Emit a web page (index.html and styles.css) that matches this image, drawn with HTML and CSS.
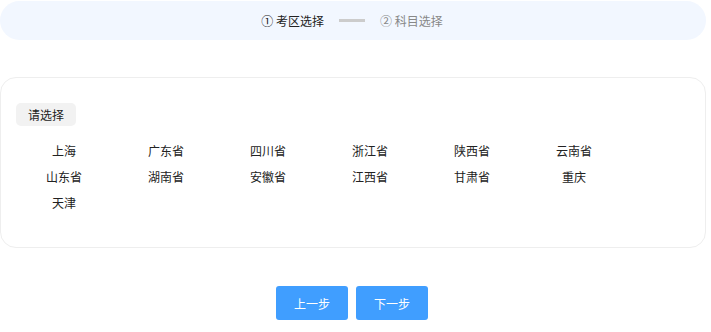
FILE: index.html
```html
<!DOCTYPE html>
<html lang="zh-CN">
<head>
    <meta charset="UTF-8">
    <meta name="viewport" content="width=device-width, initial-scale=1.0">
    <title>考区选择</title>
    <link rel="stylesheet" href="styles.css">
</head>
<body>

<div class="page">
    <div class="steps">
        <span class="step active">① 考区选择</span>
        <span class="step-line"></span>
        <span class="step">② 科目选择</span>
    </div>

    <div class="area-card">
        <span class="tag">请选择</span>
        <div class="area-list">
            <span class="area">上海</span>
            <span class="area">广东省</span>
            <span class="area">四川省</span>
            <span class="area">浙江省</span>
            <span class="area">陕西省</span>
            <span class="area">云南省</span>
            <span class="area">山东省</span>
            <span class="area">湖南省</span>
            <span class="area">安徽省</span>
            <span class="area">江西省</span>
            <span class="area">甘肃省</span>
            <span class="area">重庆</span>
            <span class="area">天津</span>
        </div>
    </div>

    <div class="actions">
        <button class="btn">上一步</button>
        <button class="btn">下一步</button>
    </div>
</div>

</body>
</html>
```

FILE: styles.css
```css
body {
    font-family: "Noto Sans CJK SC", "Liberation Sans", sans-serif;
    font-size: 12px;
    color: #222;
    background: #fff;
    margin: 0;
    padding: 0;
}
.page {
    width: 706px;
    padding-top: 1px;
}
.steps {
    height: 39px;
    background-color: #f2f7ff;
    border-radius: 20px;
    display: flex;
    align-items: center;
    justify-content: center;
    gap: 15px;
    padding-right: 2px;
}
.step {
    color: #888;
}
.step.active {
    color: #222;
}
.step-line {
    width: 26px;
    height: 3px;
    background-color: #ccc;
}
.area-card {
    margin-top: 37px;
    height: 171px;
    box-sizing: border-box;
    border: 1px solid #eee;
    border-radius: 16px;
    padding: 25px 0 0 15px;
}
.tag {
    display: inline-block;
    width: 60px;
    height: 23px;
    line-height: 23px;
    text-align: center;
    background-color: #f2f2f2;
    border-radius: 5px;
}
.area-list {
    display: grid;
    grid-template-columns: repeat(6, 102px);
    grid-auto-rows: 26px;
    margin-top: 12px;
    margin-left: -3px;
}
.area {
    text-align: center;
    line-height: 26px;
}
.actions {
    display: flex;
    justify-content: center;
    gap: 8px;
    margin-top: 38px;
    padding-right: 2px;
}
.btn {
    width: 72px;
    height: 34px;
    background-color: #409eff;
    color: #fff;
    border: none;
    border-radius: 3px;
    font-family: inherit;
    font-size: 12px;
    cursor: pointer;
}
```
